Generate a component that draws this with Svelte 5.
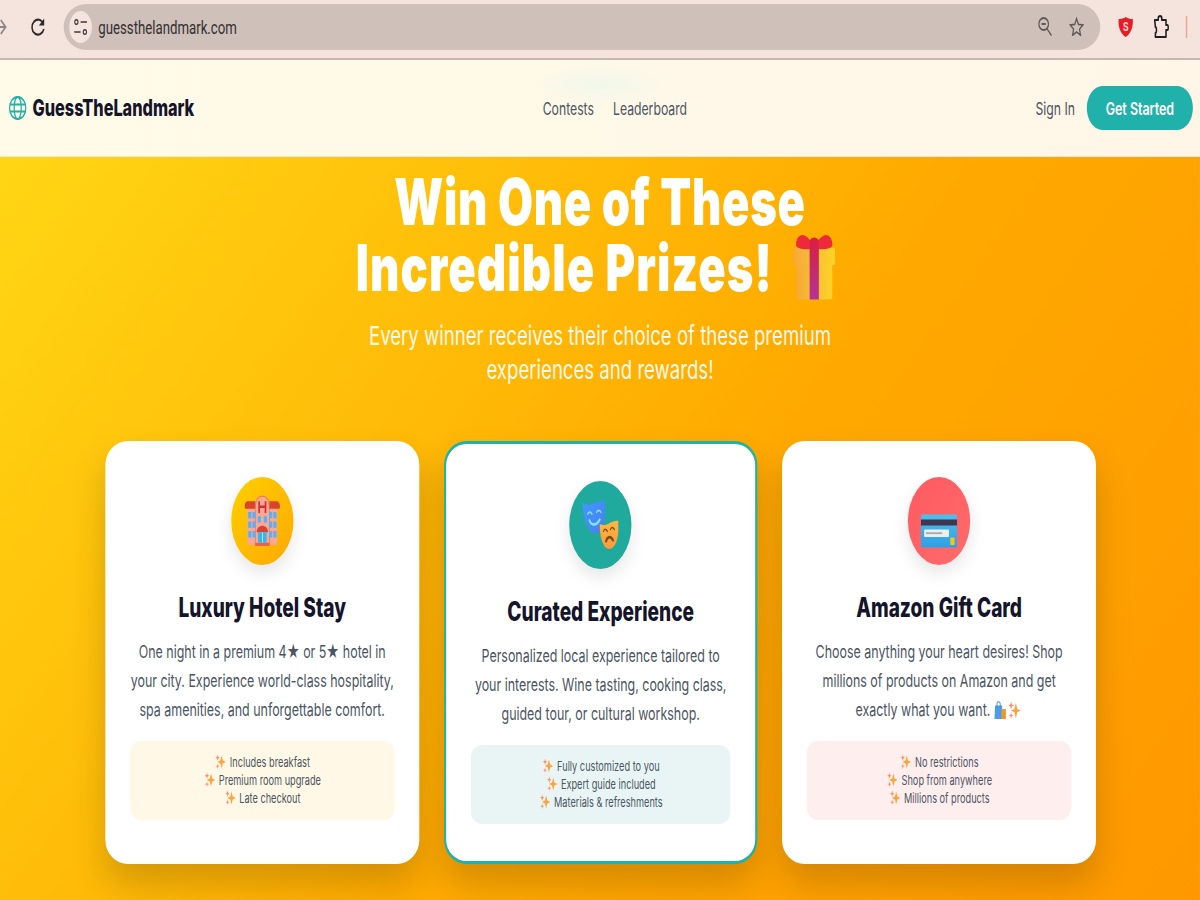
<script>
	const cards = [
		{
			id: 'hotel',
			title: 'Luxury Hotel Stay',
			text: 'One night in a premium 4★ or 5★ hotel in your city. Experience world-class hospitality, spa amenities, and unforgettable comfort.',
			features: ['Includes breakfast', 'Premium room upgrade', 'Late checkout']
		},
		{
			id: 'masks',
			title: 'Curated Experience',
			text: 'Personalized local experience tailored to your interests. Wine tasting, cooking class, guided tour, or cultural workshop.',
			features: ['Fully customized to you', 'Expert guide included', 'Materials & refreshments']
		},
		{
			id: 'card',
			title: 'Amazon Gift Card',
			text: 'Choose anything your heart desires! Shop millions of products on Amazon and get exactly what you want.',
			features: ['No restrictions', 'Shop from anywhere', 'Millions of products']
		}
	];
</script>

{#snippet sparkle()}
	<svg class="sparkle" viewBox="0 0 16 16" aria-hidden="true">
		<path d="M9.500 1.500 11.300 7 15.800 8.500 11.300 10 9.500 15.500 7.700 10 3.200 8.500 7.700 7Z" fill="#ffa23c" />
		<path d="M3.500.5 4.400 3.100 7 4 4.400 4.900 3.500 7.500 2.600 4.900 0 4 2.600 3.100Z" fill="#ff8a65" />
		<path d="M3.500 10 4.200 12.300 6.500 13 4.200 13.700 3.500 16 2.800 13.700.5 13 2.800 12.300Z" fill="#ff8a65" />
	</svg>
{/snippet}

{#snippet hotel()}
	<svg class="emoji" viewBox="0 2 52 49" preserveAspectRatio="none" aria-hidden="true">
		<rect x="5" y="14" width="42" height="35" fill="#f9a893" />
		<path d="M16 14c0-8 5-11 10-11s10 3 10 11v35H16Z" fill="#f9a893" stroke="#ee7a62" stroke-width="1.200" />
		<path d="M1 13c0-3 2-5 4-5h11v7H3c-1 0-2-1-2-2ZM51 13c0-3-2-5-4-5H36v7h13c1 0 2-1 2-2Z" fill="#d9432f" />
		<path d="M21.500 8v11M30.500 8v11M21.500 13h9" stroke="#d32f2f" stroke-width="2.400" fill="none" />
		<g fill="#5bb0f5">
			<rect x="6" y="18" width="4.500" height="6" /><rect x="12" y="18" width="4.500" height="6" />
			<rect x="6" y="27" width="4.500" height="6" /><rect x="12" y="27" width="4.500" height="6" />
			<rect x="6" y="36" width="4.500" height="6" /><rect x="12" y="36" width="4.500" height="6" />
			<rect x="35.500" y="18" width="4.500" height="6" /><rect x="41.500" y="18" width="4.500" height="6" />
			<rect x="35.500" y="27" width="4.500" height="6" /><rect x="41.500" y="27" width="4.500" height="6" />
			<rect x="35.500" y="36" width="4.500" height="6" /><rect x="41.500" y="36" width="4.500" height="6" />
			<rect x="19.500" y="22" width="4.500" height="6" /><rect x="28" y="22" width="4.500" height="6" />
		</g>
		<path d="M18 37c0-4 4-6 8-6s8 2 8 6Z" fill="#d9432f" />
		<rect x="20" y="37" width="12" height="10" fill="#35b6ee" />
		<path d="M26 37v10" stroke="#e8f7ff" stroke-width="1" />
		<rect x="16" y="47" width="20" height="3" fill="#e9634a" />
	</svg>
{/snippet}

{#snippet masks()}
	<svg class="emoji" viewBox="0 0 60 60" aria-hidden="true">
		<defs>
			<linearGradient id="maskBlue" x1="0" y1="0" x2="1" y2="1">
				<stop offset="0" stop-color="#3f9bff" />
				<stop offset="1" stop-color="#4a7cf0" />
			</linearGradient>
			<linearGradient id="maskOrange" x1="0" y1="0" x2="0" y2="1">
				<stop offset="0" stop-color="#ffb83d" />
				<stop offset="1" stop-color="#fb9a3c" />
			</linearGradient>
		</defs>
		<path d="M2 5c7 3 12 3 17 1s11-3 18-3c1 14 1 26-6 33-6 5-14 4-20-2C5 27 3 17 2 5Z" fill="url(#maskBlue)" />
		<path d="M10 18c2-3 5-3 7 0M24 16c2-3 5-3 7 0" stroke="#7fe3e8" stroke-width="1.800" fill="none" stroke-linecap="round" />
		<path d="M13 25c3 6 11 6 16-1" stroke="#7fe3e8" stroke-width="3" fill="none" stroke-linecap="round" />
		<path d="M29 29c6 2 11 1 15-1s8-2 14-3c1 12 0 21-5 27-5 6-12 6-17 1-5-6-7-14-7-24Z" fill="url(#maskOrange)" />
		<path d="M35 37c1-3 4-3 6 0M46 35c1-3 4-3 6 0" stroke="#7a4a1e" stroke-width="1.800" fill="none" stroke-linecap="round" />
		<path d="M39 48c2-6 8-6 11-1" stroke="#7a4a1e" stroke-width="3" fill="none" stroke-linecap="round" />
	</svg>
{/snippet}

{#snippet card()}
	<svg class="emoji" viewBox="0 0 52 52" aria-hidden="true">
		<defs>
			<linearGradient id="cardFill" x1="0" y1="0" x2="0" y2="1">
				<stop offset="0" stop-color="#4cc0ee" />
				<stop offset="1" stop-color="#2f9fe6" />
			</linearGradient>
		</defs>
		<rect x="0.500" y="9.500" width="51" height="33" rx="2" fill="url(#cardFill)" />
		<rect x="0.500" y="14.500" width="51" height="6" fill="#3f3650" />
		<rect x="5" y="24.500" width="35" height="7.500" rx="1" fill="#eef0f0" />
		<rect x="7.500" y="27.300" width="23" height="1.800" fill="#a9aaa8" />
		<rect x="42" y="32.500" width="6" height="7.500" rx="1" fill="#f5c518" />
	</svg>
{/snippet}

<div class="page">
	<header class="browser">
		<svg class="back" viewBox="0 0 22 20" aria-hidden="true">
			<path d="M1 10h18M12 3l7 7-7 7" fill="none" stroke="#8c8582" stroke-width="2" />
		</svg>
		<svg class="reload" viewBox="0 0 24 20" aria-hidden="true">
			<path d="M19.500 7A8.500 7.500 0 1 0 20 12" fill="none" stroke="#2b2b2b" stroke-width="2.200" />
			<path d="M20.500 1.500v7h-7.500Z" fill="#2b2b2b" />
		</svg>
		<div class="omnibox">
			<span class="site-chip">
				<svg viewBox="0 0 24 20" aria-hidden="true">
					<g fill="none" stroke="#3c3a39" stroke-width="1.500">
						<circle cx="6" cy="5" r="2.300" />
						<path d="M12 5h9M3 15h9" />
						<circle cx="18" cy="15" r="2.300" />
					</g>
				</svg>
			</span>
			<span class="url">guessthelandmark.com</span>
			<svg class="zoom-out" viewBox="0 0 20 19" aria-hidden="true">
				<g fill="none" stroke="#5f5a58" stroke-width="1.800">
					<ellipse cx="8" cy="7" rx="6.800" ry="6" />
					<path d="M5 7h6M12.500 11.500 19 18.500" />
				</g>
			</svg>
			<svg class="star" viewBox="0 0 26 24" aria-hidden="true">
				<path d="M13 2l3.300 7.300 8 .8-6 5.300 1.800 7.600-7.100-4-7.100 4 1.800-7.600-6-5.300 8-.8Z" fill="none" stroke="#5f5a58" stroke-width="2.200" />
			</svg>
		</div>
		<svg class="shield" viewBox="0 0 24 22" aria-hidden="true">
			<path d="M12 1c3 1.500 6 2 10 2 1 8-3 15-10 18C5 18 1 11 2 3c4 0 7-.5 10-2Z" fill="#e81c24" />
			<text x="12" y="15.500" text-anchor="middle" class="shield-s">S</text>
		</svg>
		<svg class="puzzle" viewBox="0 0 24 24" aria-hidden="true">
			<path d="M4 5h5V3c0-2.500 5-2.500 5 0v2h6v5h2c1.500 0 1.500 5 0 5h-2v7H5v-4c2 0 2-6 0-6Z" fill="none" stroke="#1f1f1f" stroke-width="2.200" stroke-linejoin="round" />
		</svg>
		<span class="divider"></span>
	</header>

	<nav class="topnav">
		<a class="logo" href="/">
			<svg viewBox="0 0 26 24" aria-hidden="true">
				<g fill="none" stroke="#20b2aa" stroke-width="1.800">
					<ellipse cx="13" cy="12" rx="11.500" ry="11" />
					<ellipse cx="13" cy="12" rx="5" ry="11" />
					<path d="M2 8.500h22M2 15.500h22" />
				</g>
			</svg>
			<span>GuessTheLandmark</span>
		</a>
		<div class="links">
			<a href="/">Contests</a>
			<a href="/">Leaderboard</a>
		</div>
		<div class="actions">
			<a class="signin" href="/">Sign In</a>
			<a class="cta" href="/">Get Started</a>
		</div>
	</nav>

	<main class="hero">
		<h1>
			Win One of These<br /><span class="line-two">Incredible Prizes!</span>
			<svg class="gift" viewBox="0 0 61 66" aria-hidden="true">
				<defs>
					<linearGradient id="giftBox" x1="0" y1="0" x2="1" y2="0">
						<stop offset="0" stop-color="#f5a93a" />
						<stop offset="1" stop-color="#fdd32a" />
					</linearGradient>
					<linearGradient id="ribbon" x1="0" y1="0" x2="0" y2="1">
						<stop offset="0" stop-color="#d81f3f" />
						<stop offset="1" stop-color="#b5329a" />
					</linearGradient>
				</defs>
				<path d="M6 22h50v41c0 1.500-1 2.500-2.500 2.500h-45C7 65.500 6 64.500 6 63Z" fill="url(#giftBox)" />
				<rect x="1" y="14" width="59" height="17" rx="2" fill="url(#giftBox)" />
				<path d="M28 14C22 16 9 16 5 12 4 3 12-1 18 2c5 2 9 6 11 10ZM33 14c6 2 19 2 23-2 1-9-7-13-13-10-5 2-9 6-11 10Z" fill="#ee2a3a" />
				<path d="M24 8c0-6 13-6 13 0v57.500H24Z" fill="url(#ribbon)" />
			</svg>
		</h1>
		<p class="lead">Every winner receives their choice of these premium experiences and rewards!</p>

		<div class="cards">
			{#each cards as item}
				<article class="prize prize-{item.id}">
					<div class="icon">
						{#if item.id === 'hotel'}
							{@render hotel()}
						{:else if item.id === 'masks'}
							{@render masks()}
						{:else}
							{@render card()}
						{/if}
					</div>
					<h3>{item.title}</h3>
					<p class="desc">
						{item.text}
						{#if item.id === 'card'}
							<svg class="bags" viewBox="0 0 20 20" aria-hidden="true">
								<path d="M2 5h11v15H1Z" fill="#4a9be8" />
								<path d="M5 6V3c0-3 5-3 5 0v3" fill="none" stroke="#2f7fd0" stroke-width="1.200" />
								<rect x="12" y="9" width="7" height="11" fill="#f2962c" />
							</svg>
							{@render sparkle()}
						{/if}
					</p>
					<ul class="features">
						{#each item.features as feature}
							<li>{@render sparkle()} {feature}</li>
						{/each}
					</ul>
				</article>
			{/each}
		</div>
	</main>
</div>

<style>
	:global(html),
	:global(body) {
		margin: 0;
		overflow: hidden;
	}

	/* the reference is squeezed sideways, the whole page is laid out wide and scaled */
	.page {
		width: 1697px;
		height: 900px;
		display: flex;
		flex-direction: column;
		overflow: hidden;
		transform: scaleX(0.7071);
		transform-origin: 0 0;
		font-family: Inter, "Liberation Sans", sans-serif;
	}

	.browser {
		flex: none;
		height: 60px;
		box-sizing: border-box;
		display: flex;
		align-items: center;
		padding-bottom: 5px;
		background: #f5e3de;
		border-bottom: 2px solid #c9b6b0;
	}

	.back {
		width: 22px;
		height: 20px;
		margin-left: -11px;
	}

	.reload {
		width: 24px;
		height: 20px;
		margin-left: 31px;
	}

	.omnibox {
		width: 1466px;
		height: 46px;
		margin-left: 24px;
		display: flex;
		align-items: center;
		padding: 0 8px;
		box-sizing: border-box;
		background: #cfc0b9;
		border-radius: 32px / 23px;
	}

	.site-chip {
		width: 32px;
		height: 32px;
		display: flex;
		align-items: center;
		justify-content: center;
		background: #f5e3de;
		border-radius: 50%;
	}

	.site-chip svg {
		width: 24px;
		height: 20px;
	}

	.url {
		margin-left: 9px;
		flex: 1;
		padding-top: 2px;
		font-family: Roboto, sans-serif;
		font-size: 18.7px;
		color: #33302f;
	}

	.zoom-out {
		width: 20px;
		height: 19px;
	}

	.star {
		width: 21px;
		height: 19px;
		margin: 0 15px 0 24px;
	}

	.shield {
		width: 24px;
		height: 22px;
		margin-left: 24px;
	}

	.shield-s {
		font-family: Inter, sans-serif;
		font-size: 12px;
		font-weight: 700;
		fill: #ffd9d9;
	}

	.puzzle {
		width: 26px;
		height: 24px;
		margin-left: 24px;
	}

	.divider {
		width: 2px;
		height: 22px;
		margin-left: 23px;
		background: #e8a898;
	}

	.topnav {
		flex: none;
		height: 97px;
		box-sizing: border-box;
		display: flex;
		justify-content: space-between;
		align-items: center;
		padding: 0 10px 0 12px;
		background:
			radial-gradient(ellipse 100px 22px at 849px 25px, rgba(226, 246, 238, 0.5), transparent),
			linear-gradient(90deg, #fffbe8, #fff6e8);
		border-bottom: 1px solid #efe9dc;
	}

	.topnav a {
		text-decoration: none;
	}

	.logo {
		display: flex;
		align-items: center;
		gap: 8px;
		margin-bottom: 1px;
		font-size: 23px;
		font-weight: 800;
		color: #14142b;
	}

	.logo svg {
		width: 26px;
		height: 24px;
	}

	.links {
		display: flex;
		gap: 27px;
	}

	.links a,
	.signin {
		font-size: 17.300px;
		font-weight: 400;
		color: #4b5563;
	}

	.actions {
		display: flex;
		align-items: center;
		justify-content: flex-end;
		gap: 17px;
	}

	.cta {
		height: 44px;
		padding: 0 26.500px;
		display: flex;
		align-items: center;
		border-radius: 24px;
		background: #20b2aa;
		color: #fff;
		font-size: 17.600px;
		font-weight: 600;
	}

	.hero {
		flex: 1;
		padding-top: 12px;
		text-align: center;
		background: linear-gradient(135deg, #ffd614 0%, #ffaa00 55%, #ff9800 100%);
	}

	h1 {
		margin: 0;
		font-size: 64px;
		line-height: 66px;
		font-weight: 900;
		letter-spacing: 1px;
		color: #fff;
	}

	.line-two {
		letter-spacing: 1.600px;
	}

	.gift {
		width: 61px;
		height: 66px;
		margin: -12px 12px -12px 14px;
		vertical-align: 3px;
	}

	.lead {
		width: 720px;
		margin: 18px auto 54px;
		font-size: 26.300px;
		line-height: 34px;
		color: rgba(255, 255, 255, 0.95);
	}

	.cards {
		width: 1401px;
		margin: 0 0 0 149px;
		display: grid;
		grid-template-columns: repeat(3, 1fr);
		gap: 35px;
	}

	.prize {
		padding: 36px 35px;
		box-sizing: border-box;
		height: 423px;
		background: #fff;
		border-radius: 32px / 24px;
		box-shadow: 0 20px 40px rgba(0, 0, 0, 0.17);
	}

	.prize-masks {
		padding-top: 37px;
		border: 3px solid #20b2aa;
	}

	.icon {
		width: 88px;
		height: 88px;
		margin: 0 auto;
		display: flex;
		align-items: center;
		justify-content: center;
		border-radius: 50%;
		box-shadow: 0 8px 20px rgba(0, 0, 0, 0.1);
	}

	.prize-hotel .icon {
		background: linear-gradient(135deg, #ffd000, #ffa800);
	}

	.prize-masks .icon {
		background: #20aa9e;
	}

	.prize-card .icon {
		background: linear-gradient(135deg, #ff5a5f, #ff6b6b);
	}

	.emoji {
		width: 52px;
		height: 52px;
	}

	.prize-masks .emoji {
		width: 54px;
		height: 54px;
	}

	.prize-card .emoji {
		margin-top: 20px;
	}

	h3 {
		margin: 24px 0 11px;
		font-size: 27px;
		line-height: 38px;
		font-weight: 800;
		color: #14142b;
	}

	.desc {
		margin: 0 0 17px;
		height: 86px;
		font-size: 17.600px;
		line-height: 28.800px;
		color: #4b5563;
	}

	.bags {
		width: 19px;
		height: 18px;
		vertical-align: -3px;
	}

	.sparkle {
		width: 18px;
		height: 15px;
		vertical-align: -2px;
	}

	.desc .sparkle {
		width: 22px;
		height: 18px;
		vertical-align: -3px;
	}

	.features {
		margin: 0;
		padding: 11.500px 16px 13.500px;
		list-style: none;
		border-radius: 16px / 12px;
		font-size: 13px;
		line-height: 18px;
		color: #4b5563;
	}

	.prize-hotel .features {
		background: #fff8e6;
	}

	.prize-masks .features {
		background: #e8f5f4;
	}

	.prize-card .features {
		background: #ffeeee;
	}
</style>
